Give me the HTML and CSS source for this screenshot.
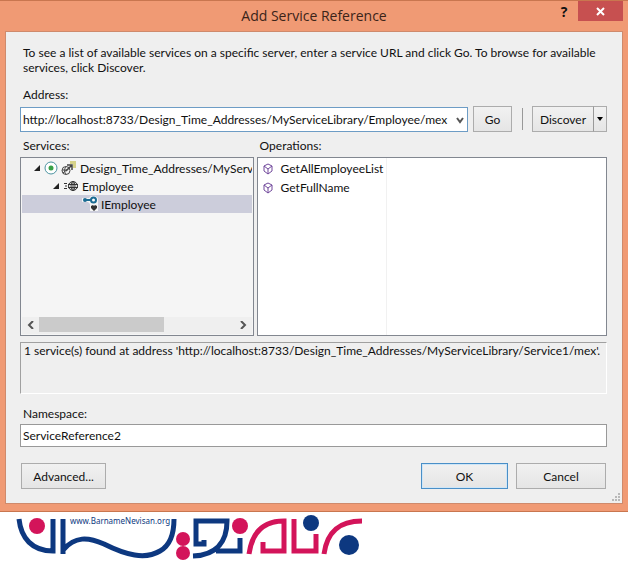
FILE: index.html
```html
<!DOCTYPE html>
<html lang="en">
<head>
<meta charset="utf-8">
<title>Add Service Reference</title>
<link rel="stylesheet" href="styles.css">
</head>
<body>
<main class="dialog">
  <header class="titlebar">
    <h1 class="title">Add Service Reference</h1>
    <div class="window-buttons">
      <button class="help" type="button">?</button>
      <button class="close" type="button" aria-label="Close"><svg width="9" height="9" viewBox="0 0 9 9"><path d="M1 1L8 8M8 1L1 8" stroke="#fff" stroke-width="2"/></svg></button>
    </div>
  </header>
  <form class="client">
    <p class="intro">To see a list of available services on a specific server, enter a service URL and click Go. To browse for available services, click Discover.</p>
    <label class="label" for="address">Address:</label>
    <div class="address-row">
      <div class="combo">
        <select id="address" class="field"><option>http://localhost:8733/Design_Time_Addresses/MyServiceLibrary/Employee/mex</option></select>
        <svg class="combo-arrow" width="8" height="8" viewBox="0 0 8 8"><path d="M1 2L4 6L7 2" fill="none" stroke="#555" stroke-width="2"/></svg>
      </div>
      <button class="button go" type="button">Go</button>
      <span class="divider"></span>
      <div class="split">
        <button class="button discover" type="button">Discover</button>
        <button class="button more" type="button" aria-label="More discovery options"><svg width="6" height="4" viewBox="0 0 6 4"><path d="M0 0H6L3 4Z" fill="#000"/></svg></button>
      </div>
    </div>
    <div class="panes">
      <section class="pane">
        <h2 class="label">Services:</h2>
        <div class="box services">
          <ul class="tree">
            <li class="row level1">
              <svg width="8" height="8" viewBox="0 0 8 8"><path d="M7 1V7H1Z" fill="#222"/></svg>
              <svg width="14" height="14" viewBox="0 0 14 14"><circle cx="7" cy="7" r="6" fill="#fff" stroke="#4b93a0"/><circle cx="7" cy="7" r="2.5" fill="#37a146"/></svg>
              <svg width="16" height="16" viewBox="0 0 16 16"><path d="M9 1H15V8H12V4H9Z" fill="#d6d28a"/><g fill="none" stroke="#444"><circle cx="5" cy="10.500" r="4"/><path d="M1 10H6M5 7C3 9 3 12 5 14M2 13L8 8"/><path d="M5 11L11 5M6 5H11V10" stroke-width="1.500"/></g></svg>
              <span class="name">Design_Time_Addresses/MyServ</span>
            </li>
            <li class="row level2">
              <svg width="8" height="8" viewBox="0 0 8 8"><path d="M7 1V7H1Z" fill="#222"/></svg>
              <svg width="16" height="14" viewBox="0 0 16 14"><g fill="none" stroke="#333"><circle cx="10" cy="7" r="4.500"/><ellipse cx="10" cy="7" rx="2" ry="4.500"/><path d="M5 5.500H15M5 8.500H15M10 2V12M1 4.500H4M2 7H4M1 9.500H4"/></g></svg>
              <span class="name">Employee</span>
            </li>
            <li class="row level3 selected">
              <svg width="16" height="16" viewBox="0 0 16 16"><path d="M0 2H7L9 0H13L16 2V15H8V8L6 6H0Z" fill="#f5f5f5"/><path d="M3 4H9" stroke="#1a6b92" stroke-width="2"/><circle cx="3" cy="4" r="2" fill="#1a6b92"/><circle cx="11.500" cy="4" r="2.500" fill="#fff" stroke="#1a6b92" stroke-width="2"/><path d="M12 15L9 12V10L11 9L12 10L13 9L15 10V12Z" fill="#333"/></svg>
              <span class="name">IEmployee</span>
            </li>
          </ul>
          <div class="scrollbar">
            <button class="scroll-button" type="button" aria-label="Scroll left"><svg width="7" height="8" viewBox="0 0 7 8"><path d="M6 0L2 4L6 8" fill="none" stroke="#555" stroke-width="2"/></svg></button>
            <div class="track"><div class="thumb"></div></div>
            <button class="scroll-button" type="button" aria-label="Scroll right"><svg width="7" height="8" viewBox="0 0 7 8"><path d="M1 0L5 4L1 8" fill="none" stroke="#555" stroke-width="2"/></svg></button>
          </div>
        </div>
      </section>
      <section class="pane">
        <h2 class="label">Operations:</h2>
        <div class="box operations">
          <ul class="operation-list">
            <li class="operation"><svg width="10" height="12" viewBox="0 0 10 12"><path d="M5 1L9 3V8L5 11L1 8V3ZM1 3L5 6L9 3M5 6V11" fill="none" stroke="#70479b"/></svg>GetAllEmployeeList</li>
            <li class="operation"><svg width="10" height="12" viewBox="0 0 10 12"><path d="M5 1L9 3V8L5 11L1 8V3ZM1 3L5 6L9 3M5 6V11" fill="none" stroke="#70479b"/></svg>GetFullName</li>
          </ul>
        </div>
      </section>
    </div>
    <output class="status">1 service(s) found at address 'http://localhost:8733/Design_Time_Addresses/MyServiceLibrary/Service1/mex'.</output>
    <label class="label" for="namespace">Namespace:</label>
    <input id="namespace" class="field namespace" type="text" value="ServiceReference2">
    <div class="actions">
      <button class="button advanced" type="button">Advanced...</button>
      <button class="button ok" type="button">OK</button>
      <button class="button cancel" type="button">Cancel</button>
    </div>
    <svg class="grip" width="9" height="9" viewBox="0 0 9 9"><path d="M6 0H8V2H6ZM3 3H5V5H3ZM6 3H8V5H6ZM0 6H2V8H0ZM3 6H5V8H3ZM6 6H8V8H6Z" fill="#b8b8b8"/></svg>
  </form>
</main>
<footer class="brand">
  <svg width="370" height="50" viewBox="0 0 370 50" fill="none" stroke-width="5">
    <g stroke="#0d3880">
      <path d="M19 7C21 26 32 39 53 39V7M63 42V7M63 38C75 24 88 25 104 32C126 43 145 48 160 39C171 33 174 20 174 7"/>
      <path d="M204 28V32H196V9H227C227 28 218 43 193 44M216 39H240V26"/>
    </g>
    <g stroke="#d3145a">
      <path d="M249 42C252 20 264 9 284 9V39H263V30M294 7V39H316V22M324 42C327 20 339 9 362 9"/>
    </g>
    <g fill="#d3145a"><circle cx="37" cy="14" r="8"/><circle cx="183" cy="27" r="7"/><circle cx="183" cy="41" r="7"/><circle cx="240" cy="14" r="8"/></g>
    <g fill="#0d3880"><circle cx="311" cy="11" r="8"/><circle cx="349" cy="33" r="10"/><text class="brand-url" x="70" y="12">www.BarnameNevisan.org</text></g>
  </svg>
</footer>
</body>
</html>
```
FILE: styles.css
```css
* { box-sizing: border-box; }
body { margin: 0; background: #fff; color: #111; font: 12px/15px Lato, "Noto Sans", sans-serif; }
button, select, input { font: inherit; color: inherit; }
h1, h2, p, ul { margin: 0; padding: 0; font-weight: normal; list-style: none; }
h2 { font-size: 12px; }
svg { flex: none; display: block; }

.dialog { background: #f09a74; border-top: 1px solid #c9764f; border-bottom: 1px solid #c9764f; padding: 0 5px 7px; }
.titlebar { display: grid; grid-template-columns: 1fr auto 1fr; height: 30px; }
.title { grid-column: 2; font: 14px/30px "Open Sans", sans-serif; color: #3b2419; }
.window-buttons { display: flex; justify-content: flex-end; align-items: flex-start; }
.help, .close { border: 0; padding: 0; height: 20px; }
.help { width: 28px; background: none; font: bold 14px "Open Sans", sans-serif; }
.close { display: grid; place-items: center; width: 45px; background: #c75050; }

.client { position: relative; background: #efefef; border: 1px solid #cf8a6c; padding: 13px 15px 14px 14px; }
.intro { margin: 0 3px 12px; }
.label { display: block; margin-left: 3px; line-height: 15px; }
.field { width: 100%; background: #fff; border: 1px solid #999; border-radius: 0; padding: 0 2px; }
.address-row { display: flex; align-items: center; margin: 4px 0 6px; }
.combo { position: relative; flex: 1; min-width: 0; }
.combo .field { display: block; height: 25px; appearance: none; border-color: #6d9cc5; padding-right: 16px; }
.combo-arrow { position: absolute; right: 4px; top: 9px; pointer-events: none; }
.button { height: 26px; border: 1px solid #acacac; background: linear-gradient(#f1f1f1, #e5e5e5); padding: 0; }
.go { width: 39px; margin-left: 5px; }
.divider { width: 1px; height: 22px; margin: 0 9px 0 10px; background: #999; }
.split { display: flex; }
.discover { width: 61px; border-right: 0; }
.more { display: grid; place-items: center; width: 14px; border-left-color: #999; }

.panes { display: grid; grid-template-columns: 2fr 3fr; gap: 3px; }
.pane { min-width: 0; }
.box { height: 179px; margin-top: 4px; border: 1px solid #828790; }
.services { display: flex; flex-direction: column; justify-content: space-between; background: #f5f5f5; padding: 1px; }
.row { display: flex; align-items: center; height: 18px; gap: 3px; overflow: hidden; white-space: nowrap; }
.level1 { padding-left: 11px; }
.level2 { padding-left: 30px; }
.level3 { padding-left: 60px; }
.selected { background: #cccddb; }
.scrollbar { display: flex; height: 17px; padding-bottom: 1px; background: #efefef; }
.scroll-button { display: grid; place-items: center; width: 17px; padding: 0; border: 0; background: none; }
.track { flex: 1; }
.thumb { width: 64%; height: 15px; background: #cbcbcb; }
.operations { background: #fff; }
.operation-list { width: 37%; height: 100%; padding-top: 1px; border-right: 1px solid #f1f1f1; }
.operation { display: flex; align-items: center; gap: 8px; height: 19px; padding-left: 5px; white-space: nowrap; }

.status { display: block; height: 52px; margin: 6px 0 12px; padding: 0 3px; border: 1px solid; border-color: #a0a0a0 #fff #fff #a0a0a0; white-space: nowrap; overflow: hidden; }
.namespace { display: block; height: 23px; margin-top: 3px; }
.actions { display: flex; gap: 8px; margin: 16px 1px 0; }
.advanced { width: 85px; margin-right: auto; }
.ok { width: 87px; border-color: #4a8fc7; box-shadow: inset 0 0 0 1px #cfe6f7; }
.cancel { width: 90px; }
.grip { position: absolute; right: 1px; bottom: 1px; }
.brand-url { font: 8px "Noto Sans", sans-serif; stroke: none; }
```
